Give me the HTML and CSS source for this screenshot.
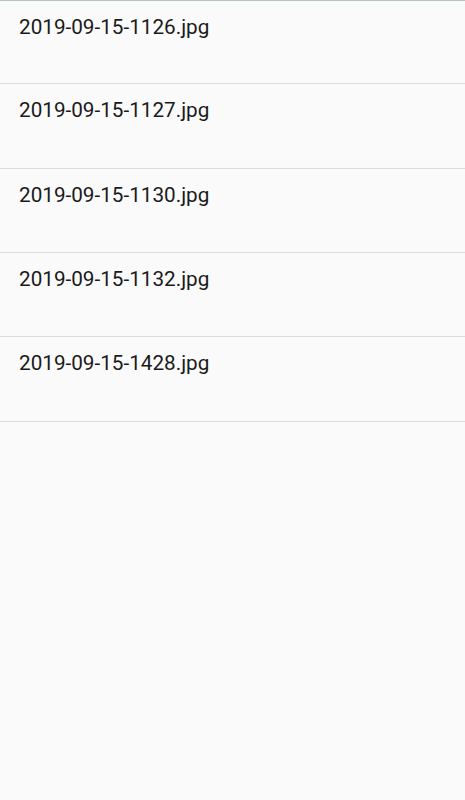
FILE: index.html
```html
<!DOCTYPE html>
<html lang="en">
<head>
    <meta charset="UTF-8">
    <meta name="viewport" content="width=device-width, initial-scale=1.0">
    <title>Files</title>
    <link rel="stylesheet" href="styles.css">
</head>
<body>
    <ul class="file-list">
        <li class="file-item">2019-09-15-1126.jpg</li>
        <li class="file-item">2019-09-15-1127.jpg</li>
        <li class="file-item">2019-09-15-1130.jpg</li>
        <li class="file-item">2019-09-15-1132.jpg</li>
        <li class="file-item">2019-09-15-1428.jpg</li>
    </ul>
</body>
</html>
```

FILE: styles.css
```css
html, body {
    margin: 0;
    height: 100%;
}
body {
    background-color: #fafafa;
    font-family: Roboto, "Noto Sans", sans-serif;
    color: #1a1a1a;
    border-top: 1px solid #b4c4c4;
    box-sizing: border-box;
}
.file-list {
    list-style: none;
    margin: 0;
    padding: 0;
}
.file-item {
    box-sizing: border-box;
    height: 84.3px;
    padding: 14px 19px 0;
    font-size: 20.7px;
    line-height: 25px;
    border-bottom: 1px solid #dcdcdc;
}
.file-item:first-child {
    height: 83.4px;
}
```
